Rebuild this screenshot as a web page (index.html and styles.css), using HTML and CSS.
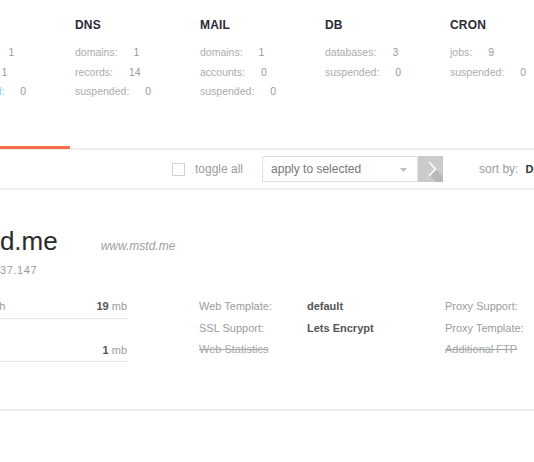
FILE: index.html
```html
<!DOCTYPE html>
<html>
<head>
<meta charset="utf-8">
<link rel="stylesheet" href="styles.css">
</head>
<body>
<div class="page">
  <div class="stats">
    <div class="stat-col">
      <h4 class="stat-title">WEB</h4>
      <div class="stat-row"><span class="stat-label">domains:</span><span class="stat-val">1</span></div>
      <div class="stat-row"><span class="stat-label">aliases:</span><span class="stat-val">1</span></div>
      <div class="stat-row"><span class="stat-label hl">suspended:</span><span class="stat-val">0</span></div>
    </div>
    <div class="stat-col">
      <h4 class="stat-title">DNS</h4>
      <div class="stat-row"><span class="stat-label">domains:</span><span class="stat-val">1</span></div>
      <div class="stat-row"><span class="stat-label">records:</span><span class="stat-val">14</span></div>
      <div class="stat-row"><span class="stat-label">suspended:</span><span class="stat-val">0</span></div>
    </div>
    <div class="stat-col">
      <h4 class="stat-title">MAIL</h4>
      <div class="stat-row"><span class="stat-label">domains:</span><span class="stat-val">1</span></div>
      <div class="stat-row"><span class="stat-label">accounts:</span><span class="stat-val">0</span></div>
      <div class="stat-row"><span class="stat-label">suspended:</span><span class="stat-val">0</span></div>
    </div>
    <div class="stat-col">
      <h4 class="stat-title">DB</h4>
      <div class="stat-row"><span class="stat-label">databases:</span><span class="stat-val">3</span></div>
      <div class="stat-row"><span class="stat-label">suspended:</span><span class="stat-val">0</span></div>
    </div>
    <div class="stat-col">
      <h4 class="stat-title">CRON</h4>
      <div class="stat-row"><span class="stat-label">jobs:</span><span class="stat-val">9</span></div>
      <div class="stat-row"><span class="stat-label">suspended:</span><span class="stat-val">0</span></div>
    </div>
  </div>

  <div class="tabs"><div class="tab-active"></div></div>

  <div class="toolbar">
    <span class="checkbox"></span>
    <span class="toggle-label">toggle all</span>
    <div class="select">
      <span class="select-text">apply to selected</span>
      <svg class="caret" width="7" height="4" viewBox="0 0 7 4"><polygon points="0,0 7,0 3.5,4" fill="#bdbdbd"/></svg>
    </div>
    <div class="go-btn">
      <svg width="25" height="26" viewBox="0 0 25 26">
        <rect width="25" height="26" fill="#cbcbcb"/>
        <polygon points="17.5,13 25,20.5 25,26 18,26 11,19" fill="#b9b9b9"/>
        <polyline points="11,6 17.5,13 11,20" fill="none" stroke="#ffffff" stroke-width="1.6"/>
      </svg>
    </div>
    <span class="sort-label">sort by:</span>
    <span class="sort-val">DATE</span>
  </div>

  <div class="unit">
    <div class="unit-head">
      <span class="domain">mstd.me</span><span class="alias">www.mstd.me</span>
    </div>
    <div class="ip">37.147</div>
    <div class="details">
      <div class="usage">
        <div class="usage-row"><span class="usage-label">Bandwidth</span><span class="usage-val"><b>19</b> mb</span></div>
        <div class="usage-row second"><span class="usage-label">Disk</span><span class="usage-val"><b>1</b> mb</span></div>
      </div>
      <div class="props props-mid">
        <div class="prop"><span class="prop-label">Web Template:</span><span class="prop-val">default</span></div>
        <div class="prop"><span class="prop-label">SSL Support:</span><span class="prop-val">Lets Encrypt</span></div>
        <div class="prop"><span class="prop-label off">Web Statistics</span></div>
      </div>
      <div class="props">
        <div class="prop"><span class="prop-label">Proxy Support:</span><span class="prop-val">nginx</span></div>
        <div class="prop"><span class="prop-label">Proxy Template:</span><span class="prop-val">default</span></div>
        <div class="prop"><span class="prop-label off">Additional FTP</span></div>
      </div>
    </div>
  </div>
</div>
</body>
</html>
```

FILE: styles.css
```css
html, body {
  margin: 0;
  padding: 0;
  background: #ffffff;
  overflow: hidden;
}

body {
  font-family: "Liberation Sans", Arial, sans-serif;
  width: 534px;
  height: 462px;
}

.page {
  width: 534px;
  overflow: hidden;
}

/* stats */
.stats {
  display: flex;
  margin-left: -50px;
  height: 146px;
  box-sizing: border-box;
  padding-top: 18px;
}

.stat-col {
  flex: 0 0 125px;
}

.stat-title {
  margin: 0 0 11px 0;
  font-size: 12px;
  line-height: 14px;
  font-weight: bold;
  color: #2b2b36;
  letter-spacing: 0.2px;
}

.stat-row {
  font-size: 10.5px;
  line-height: 19.6px;
  white-space: nowrap;
}

.stat-label {
  color: #acacac;
}

.stat-label.hl {
  color: #78d0e6;
}

.stat-val {
  color: #9a9a9a;
  margin-left: 16px;
}

/* tabs */
.tabs {
  display: flex;
  height: 2px;
  border-bottom: 2px solid #efefef;
}

.tab-active {
  width: 70px;
  height: 3px;
  background: #fd6c45;
  flex: 0 0 70px;
}

/* toolbar */
.toolbar {
  display: flex;
  align-items: center;
  height: 38px;
  border-bottom: 2px solid #f0f0f0;
  white-space: nowrap;
}

.checkbox {
  flex: 0 0 auto;
  width: 11px;
  height: 11px;
  border: 1px solid #d2d2d2;
  margin-left: 172px;
}

.toggle-label {
  margin-left: 10px;
  font-size: 12px;
  color: #9b9b9b;
}

.select {
  flex: 0 0 auto;
  box-sizing: border-box;
  margin-left: 19px;
  width: 156px;
  height: 26px;
  border: 1px solid #e1e1e1;
  display: flex;
  align-items: center;
  justify-content: space-between;
  padding: 0 10px 0 8px;
}

.select-text {
  font-size: 12px;
  color: #777777;
}

.caret {
  display: block;
  margin-top: 1px;
}

.go-btn {
  flex: 0 0 25px;
  height: 26px;
}

.go-btn svg {
  display: block;
}

.sort-label {
  margin-left: 36px;
  font-size: 12px;
  color: #9b9b9b;
}

.sort-val {
  margin-left: 7px;
  font-size: 11px;
  font-weight: bold;
  color: #333333;
}

/* unit */
.unit {
  margin-left: -46px;
  padding-top: 36px;
  padding-bottom: 47px;
  border-bottom: 2px solid #eeeeee;
}

.unit-head {
  line-height: 30px;
  height: 30px;
  white-space: nowrap;
  padding-left: 4px;
}

.domain {
  font-size: 26px;
  color: #2a2a2a;
}

.alias {
  margin-left: 43px;
  font-size: 12px;
  font-style: italic;
  color: #a0a0a0;
}

.ip {
  margin-top: 7px;
  margin-left: 46px;
  font-size: 11px;
  line-height: 14px;
  letter-spacing: 0.6px;
  color: #9a9a9a;
}

.details {
  display: flex;
  margin-top: 19px;
  white-space: nowrap;
}

.usage {
  flex: 0 0 173px;
}

.usage-row {
  display: flex;
  justify-content: space-between;
  font-size: 11px;
  line-height: 21.5px;
  border-bottom: 1px dotted #cfcfcf;
  color: #9a9a9a;
}

.usage-row.second {
  padding-top: 21px;
}

.usage-val b {
  color: #555555;
}

.props {
  flex: 0 0 auto;
}

.props-mid {
  margin-left: 72px;
  flex: 0 0 246px;
}

.prop {
  font-size: 11px;
  line-height: 21.5px;
  display: flex;
}

.prop-label {
  flex: 0 0 108px;
  color: #9c9c9c;
}

.prop-label.off {
  text-decoration: line-through;
  color: #a6a6a6;
}

.prop-val {
  font-weight: bold;
  color: #555555;
}
```
